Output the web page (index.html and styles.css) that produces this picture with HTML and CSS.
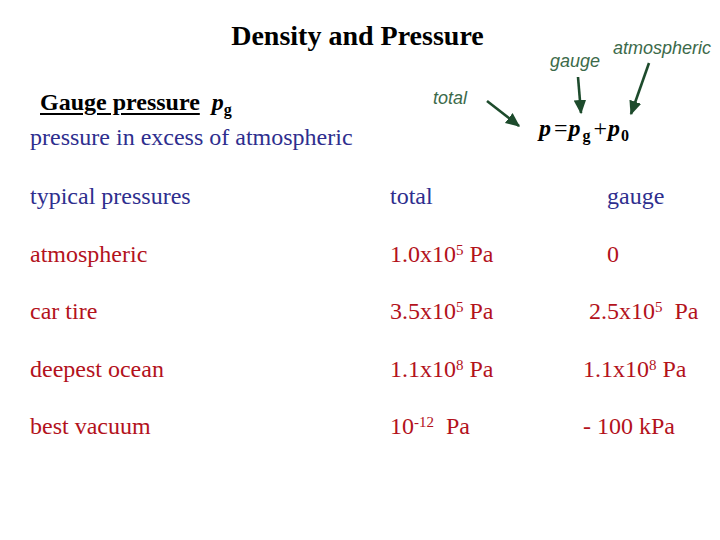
FILE: index.html
```html
<!DOCTYPE html>
<html>
<head>
<meta charset="utf-8">
<link rel="stylesheet" href="styles.css">
</head>
<body>
<div class="slide">
  <h1 class="title">Density and Pressure</h1>
  <div class="def">
    <p class="def-head"><span class="u">Gauge pressure</span><span class="sym">p<sub>g</sub></span></p>
    <p class="def-text">pressure in excess of atmospheric</p>
  </div>
  <div class="table">
    <div class="blue">typical pressures</div>
    <div class="blue">total</div>
    <div class="blue">&nbsp;&nbsp;&nbsp;&nbsp;gauge</div>

    <div class="red">atmospheric</div>
    <div class="red">1.0x10<sup>5</sup> Pa</div>
    <div class="red">&nbsp;&nbsp;&nbsp;&nbsp;0</div>

    <div class="red">car tire</div>
    <div class="red">3.5x10<sup>5</sup> Pa</div>
    <div class="red">&nbsp;2.5x10<sup>5</sup>&nbsp; Pa</div>

    <div class="red">deepest ocean</div>
    <div class="red">1.1x10<sup>8</sup> Pa</div>
    <div class="red">1.1x10<sup>8</sup> Pa</div>

    <div class="red">best vacuum</div>
    <div class="red">10<sup>-12</sup>&nbsp; Pa</div>
    <div class="red">- 100 kPa</div>
  </div>

  <div class="annot">
    <svg class="arrows" width="720" height="540" viewBox="0 0 720 540">
      <defs>
        <marker id="ah" markerWidth="6" markerHeight="6" refX="5" refY="3" orient="auto" markerUnits="strokeWidth">
          <path d="M0,0.6 L5.5,3 L0,5.4 Z" fill="#1d4b2c"/>
        </marker>
      </defs>
      <line x1="487" y1="101" x2="519" y2="126" stroke="#1d4b2c" stroke-width="2.6" marker-end="url(#ah)"/>
      <line x1="578" y1="77" x2="581" y2="113" stroke="#1d4b2c" stroke-width="2.6" marker-end="url(#ah)"/>
      <line x1="649" y1="63" x2="631" y2="114" stroke="#1d4b2c" stroke-width="2.6" marker-end="url(#ah)"/>
    </svg>
    <span class="lbl lbl-total">total</span>
    <span class="lbl lbl-gauge">gauge</span>
    <span class="lbl lbl-atm">atmospheric</span>
    <div class="eq"><i>p</i><span class="op eqs">=</span><i>p</i><sub class="sg">g</sub><span class="op plus">+</span><i>p</i><sub>0</sub></div>
  </div>
</div>
</body>
</html>
```

FILE: styles.css
```css
html, body {
  margin: 0;
  padding: 0;
  background: #ffffff;
}

.slide {
  position: relative;
  width: 720px;
  height: 540px;
  overflow: hidden;
  font-family: "Liberation Serif", "Times New Roman", serif;
  color: #000;
}

.title {
  margin: 0;
  padding: 20px 5px 0 0;
  font-size: 28px;
  line-height: 32px;
  font-weight: bold;
  text-align: center;
}

.def {
  margin-top: 36px;
}

.def p {
  margin: 0;
  font-size: 24px;
  line-height: 28px;
}

.def-head {
  padding-left: 40px;
  font-weight: bold;
}

.def-head .u {
  text-decoration: underline;
  text-decoration-thickness: 2px;
  text-underline-offset: 3px;
}

.def-head .sym {
  margin-left: 12px;
  font-style: italic;
}

.def-head .sym sub {
  font-style: normal;
  font-size: 16px;
  vertical-align: -5px;
  line-height: 0;
}

.def-text {
  margin-top: 7px !important;
  padding-left: 30px;
  color: #2e2e8e;
}

.table {
  display: grid;
  grid-template-columns: 360px 193px 1fr;
  row-gap: 29.5px;
  margin-top: 31px;
  padding-left: 30px;
  font-size: 24px;
  line-height: 28px;
}

.table div {
  white-space: nowrap;
}

.table sup {
  font-size: 15px;
  line-height: 0;
  vertical-align: 7px;
}

.blue {
  color: #2e2e8e;
}

.red {
  color: #b3121c;
}

.annot {
  position: absolute;
  left: 0;
  top: 0;
  width: 720px;
  height: 540px;
  pointer-events: none;
}

.arrows {
  position: absolute;
  left: 0;
  top: 0;
}

.lbl {
  position: absolute;
  font-family: "Liberation Sans", Arial, sans-serif;
  font-style: italic;
  font-size: 18px;
  line-height: 20px;
  color: #3c6a4a;
}

.lbl-total {
  left: 433px;
  top: 88px;
}

.lbl-gauge {
  left: 550px;
  top: 51px;
}

.lbl-atm {
  left: 613px;
  top: 38px;
}

.eq {
  position: absolute;
  left: 539px;
  top: 114px;
  font-size: 24px;
  line-height: 28px;
  font-weight: bold;
  white-space: nowrap;
}

.eq i {
  font-style: italic;
}

.eq sub {
  font-size: 16px;
  line-height: 0;
  vertical-align: -5px;
  margin-left: 1px;
}

.eq .op {
  font-weight: normal;
}

.eq .eqs {
  margin: 0 1px 0 3px;
}

.eq .sg {
  margin-left: 2px;
}

.eq .plus {
  margin: 0 1px 0 3px;
}
```
